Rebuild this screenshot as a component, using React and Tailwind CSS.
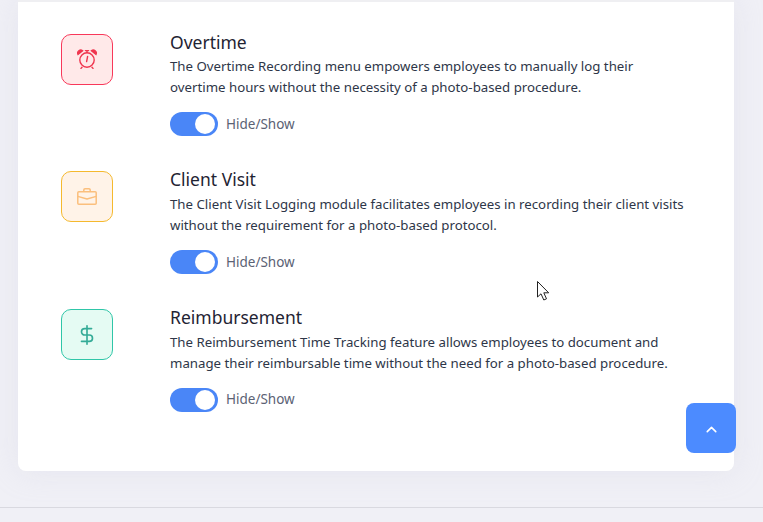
import React from 'react';
import { ChevronUp, DollarSign } from 'lucide-react';

const AlarmIcon = () => (
  <svg width="20" height="20" viewBox="0 0 20 20" fill="none" stroke="currentColor" strokeWidth="1.4" strokeLinecap="round">
    <circle cx="10" cy="11" r="7.2" />
    <path d="M10.6 7.5L9.6 12.6" />
    <path d="M5 18.2L4 19.4M15 18.2L16 19.4" />
    <path d="M1 5.4A3 3 0 0 1 5.6 1.8Z" fill="currentColor" />
    <path d="M19 5.4A3 3 0 0 0 14.4 1.8Z" fill="currentColor" />
    <path d="M8.4 1.6H11.6M10 1.6V3.6" />
  </svg>
);

const BriefcaseIcon = () => (
  <svg width="20" height="17" viewBox="0 0 20 17" fill="none" stroke="currentColor" strokeWidth="1.5" strokeLinejoin="round">
    <rect x="0.8" y="3.8" width="18.4" height="12.4" rx="1" />
    <path d="M6.8 3.8V2A1.2 1.2 0 0 1 8 0.8H12A1.2 1.2 0 0 1 13.2 2V3.8" />
    <path d="M0.8 8.4L10 11L19.2 8.4" />
  </svg>
);

const DollarIcon = () => <DollarSign size={22} strokeWidth={1.8} />;

const features = [
  {
    title: 'Overtime',
    text: ['The Overtime Recording menu empowers employees to manually log their', 'overtime hours without the necessity of a photo-based procedure.'],
    box: 'bg-[#ffe9e9] border-[#f8385a] text-[#f0364f]',
    Icon: AlarmIcon,
  },
  {
    title: 'Client Visit',
    text: ['The Client Visit Logging module facilitates employees in recording their client visits', 'without the requirement for a photo-based protocol.'],
    box: 'bg-[#fff3e8] border-[#f5b92e] text-[#fbbf7d]',
    Icon: BriefcaseIcon,
  },
  {
    title: 'Reimbursement',
    text: ['The Reimbursement Time Tracking feature allows employees to document and', 'manage their reimbursable time without the need for a photo-based procedure.'],
    box: 'bg-[#e5fbf3] border-[#2fc6a8] text-[#34ab97]',
    Icon: DollarIcon,
  },
];

const Toggle = () => (
  <div className="flex items-center gap-2">
    <div className="flex h-6 w-12 items-center justify-end rounded-full bg-[#4a86f7] pr-[3px]">
      <div className="h-5 w-5 rounded-full bg-white"></div>
    </div>
    <span className="text-[13.5px] text-[#5b6274]">Hide/Show</span>
  </div>
);

const FeatureRow = ({ item }) => {
  const Icon = item.Icon;
  return (
    <div className="flex h-[137.8px]">
      <div className={`flex h-[51px] w-[52px] items-center justify-center rounded-[10px] border ${item.box}`}>
        <Icon />
      </div>
      <div className="ml-[57px]">
        <div className="text-[17.5px] leading-[16px] text-[#1f2433]">{item.title}</div>
        <div className="mt-[6.6px] text-[13.25px] leading-[21px] text-[#2e3648]">
          {item.text.map((line) => (
            <div key={line} className="whitespace-nowrap">{line}</div>
          ))}
        </div>
        <div className="mt-[13.9px]">
          <Toggle />
        </div>
      </div>
    </div>
  );
};

export default function App() {
  return (
    <div
      className="relative h-[522px] w-[763px] overflow-hidden bg-[#f0f0f6]"
      style={{ fontFamily: '"Noto Sans", "Open Sans", sans-serif' }}
    >
      <div className="ml-[18px] h-[471px] w-[716px] rounded-b-lg border-t-2 border-[#efeff2] bg-white pl-[43px] pt-[31.5px] shadow-[0_0_30px_rgba(200,200,220,0.25)]">
        {features.map((item) => (
          <FeatureRow key={item.title} item={item} />
        ))}
      </div>
      <div className="mt-9 border-t border-[#d9d9e0]"></div>

      <button className="absolute left-[686px] top-[403px] flex h-[50px] w-[50px] items-center justify-center rounded-lg bg-[#4c8bff] pt-[2px] text-white">
        <ChevronUp size={17} strokeWidth={2.25} />
      </button>

      {/* mouse pointer */}
      <svg className="absolute left-[536px] top-[280px]" width="15" height="22" viewBox="0 0 15 22">
        <path d="M1.5 1.5V17L5 13.8L7.8 20L10.5 18.8L7.8 12.8H12.7Z" fill="#fff" stroke="#222" strokeWidth="1" />
      </svg>
    </div>
  );
}
